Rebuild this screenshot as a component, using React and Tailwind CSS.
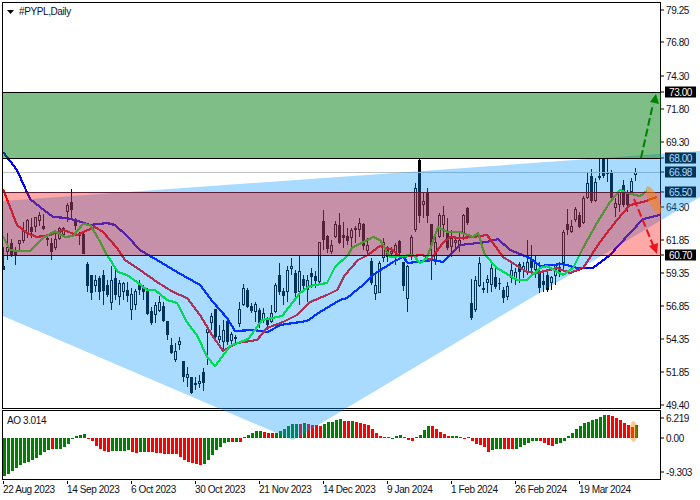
import React from "react";

// y in page pixels: [high, bodyTop, bodyBottom, low, bear]
const candles = [
  [247,266,270,270,1],[233,247,252,260,0],[239,243,255,257,1],[247,250,255,265,1],[240,240,244,250,0],
  [222,231,241,243,0],[219,220,233,238,0],[218,227,232,238,1],[217,217,227,232,0],[212,215,221,226,0],
  [214,226,229,230,1],[237,238,240,246,0],[238,243,252,260,1],[230,239,248,250,0],[227,228,239,240,0],
  [227,228,235,237,0],[203,205,212,222,0],[189,202,210,220,1],[218,220,226,230,1],[232,234,236,245,0],
  [232,234,254,254,1],[262,264,286,292,1],[276,275,293,300,1],[275,280,286,292,0],[276,278,292,300,1],
  [270,275,291,305,1],[280,285,295,297,1],[266,280,303,310,0],[270,278,295,300,1],[280,283,297,305,0],
  [282,283,292,300,0],[282,290,296,302,1],[288,294,310,320,0],[289,291,305,310,0],[280,284,290,295,1],
  [285,288,292,300,1],[288,291,314,315,1],[307,311,323,325,1],[302,305,315,323,0],[296,302,311,312,0],
  [302,306,321,322,1],[321,321,335,340,1],[338,345,353,354,1],[343,351,360,362,0],[337,341,345,350,0],
  [361,361,377,382,1],[367,374,378,387,0],[377,377,393,394,1],[377,383,385,390,1],[375,381,384,388,0],
  [368,372,383,391,1],[328,329,333,365,0],[313,316,323,330,0],[309,309,337,342,1],[325,336,340,343,0],
  [320,330,342,350,0],[317,321,342,345,1],[332,334,341,345,0],[335,337,339,344,1],[302,309,324,327,0],
  [284,288,305,306,0],[288,290,307,308,1],[303,306,311,313,1],[302,304,312,322,0],[308,310,323,328,1],
  [308,313,320,323,0],[317,320,325,330,1],[305,313,322,323,0],[283,285,312,313,0],[263,275,292,295,1],
  [288,291,296,305,1],[266,270,292,302,0],[258,266,269,275,0],[270,273,293,300,1],[255,271,292,305,0],
  [275,279,286,292,1],[275,280,290,302,0],[268,273,277,288,1],[271,276,281,288,1],[242,242,282,285,0],
  [210,221,240,250,1],[235,236,249,253,1],[240,245,252,254,0],[221,224,237,238,0],[213,225,243,244,1],
  [222,235,238,248,1],[228,236,241,245,1],[228,230,238,247,0],[226,228,230,243,0],[218,223,230,237,0],
  [223,224,246,250,1],[238,245,251,256,0],[258,261,283,285,1],[275,285,294,300,0],[261,263,293,293,0],
  [238,242,258,262,0],[246,250,257,262,1],[247,251,254,258,0],[243,245,253,265,0],[240,241,253,257,1],
  [262,262,286,291,1],[265,266,299,312,0],[235,237,256,260,0],[183,188,230,232,0],[159,160,216,223,1],
  [192,201,205,218,0],[188,192,216,223,1],[224,224,245,280,1],[235,242,262,265,0],[213,215,237,238,0],
  [206,215,225,237,0],[218,233,248,250,1],[230,238,247,257,0],[238,240,243,250,0],[233,240,245,252,0],
  [214,215,233,240,0],[207,208,223,225,1],[279,303,318,320,1],[276,280,310,312,0],[257,263,286,287,0],
  [282,288,290,293,1],[275,279,283,293,0],[262,268,285,292,0],[268,277,287,289,1],[278,283,284,290,1],
  [287,290,298,303,1],[282,286,297,300,0],[262,270,278,283,0],[268,272,280,285,0],[262,264,272,283,1],
  [262,266,270,278,0],[240,262,272,275,0],[245,260,268,272,1],[255,262,270,278,0],[262,272,288,293,1],
  [272,281,285,292,1],[270,275,290,292,1],[276,277,283,290,0],[265,265,276,285,0],[262,267,273,277,1],
  [230,232,263,270,0],[209,224,230,235,1],[220,226,232,233,0],[207,209,220,222,0],[212,215,227,228,1],
  [196,198,223,224,0],[173,183,198,199,0],[169,176,201,203,1],[178,182,201,202,0],[158,176,178,180,1],
  [158,158,176,178,1],[158,172,174,182,1],[170,172,198,200,1],[198,203,208,217,0],[190,192,205,212,0],
  [180,185,205,207,1],[190,192,205,212,1],[178,181,192,193,0],[168,172,175,181,0],
];

const blueLine = "3,152 17,170 30,199 40,207 53,217 67,218 78,221 90,225 107,223 115,225 127,236 140,250 150,256 157,260 177,272 200,285 213,302 227,318 235,331 253,330 268,332 280,325 307,321 320,312 340,300 347,298 363,285 373,275 393,262 403,257 408,263 433,260 443,262 450,255 460,245 487,242 498,239 510,250 530,258 540,266 563,264 577,268 593,268 610,255 630,233 643,219 660,215";
const redLine = "3,189 10,207 17,225 27,233 37,237 50,235 63,230 77,235 88,230 95,227 103,232 117,248 125,260 140,270 157,282 173,292 187,298 200,315 212,335 223,351 237,343 257,340 267,328 283,322 297,315 310,302 327,295 337,290 345,275 358,260 368,255 380,246 393,250 400,257 423,255 430,260 443,243 450,237 460,238 473,237 487,235 493,243 503,257 527,272 537,273 557,268 570,273 583,268 600,242 617,220 630,205 643,202 657,197";
const limeLine = "3,236 10,250 17,251 30,251 43,238 55,231 65,237 73,236 83,224 90,225 98,238 107,255 118,272 127,275 137,282 147,290 155,290 167,300 177,303 187,322 198,337 207,357 215,366 222,357 230,346 248,339 255,330 262,320 282,316 300,293 310,286 327,283 335,267 348,255 352,248 373,237 380,240 390,257 413,255 420,263 427,258 438,227 447,232 460,232 473,237 478,233 485,255 497,268 517,280 527,280 540,268 547,266 563,275 573,268 583,248 597,223 610,202 620,190 627,193 640,196 647,191";

// AO bars, read as y offset on a 3x scale with zero at 113
const aoSegments = [
  ["g", [228,222,213,205,195,190,185,180,175,165,155,150]],
  ["r", [148]],
  ["g", [147,146,141,132,117,107,105,102]],
  ["r", [114,124,137,147,153,155]],
  ["g", [153,153,153,153,150]],
  ["r", [155,160]],
  ["g", [156,156]],
  ["r", [156,157,158,160,162,163,162,163,170,180,186,188,192,195]],
  ["g", [192,180,165,150,140,128,125]],
  ["r", [127]],
  ["g", [125]],
  ["r", [126]],
  ["g", [110,105,100,93,92]],
  ["r", [96,98,99]],
  ["g", [98,92,88,79,72,72]],
  ["r", [72]],
  ["g", [69]],
  ["r", [73,75,75,78]],
  ["g", [71,66,66,61,57]],
  ["r", [63,63]],
  ["g", [63]],
  ["r", [65,69,71,76,87,98,107,110,112]],
  ["g", [116,108,105]],
  ["r", [112,120,122]],
  ["g", [112,105,91,78]],
  ["r", [78,87,96,102,107]],
  ["g", [109,108]],
  ["r", [111,116]],
  ["g", [112]],
  ["r", [124,133,135,142,155]],
  ["g", [150,148,147]],
  ["r", [147,147,147]],
  ["g", [147,142,135,128,124,122]],
  ["r", [124,129,134,137]],
  ["g", [133,130,124,108,100,87,77,70,65,60,57,52,46]],
  ["r", [46,48,54,60,69,76,80]],
  ["g", [75]],
];
const aoBars = aoSegments.flatMap(([c, vals]) => vals.map((v) => [c, v]));

const priceLabels = [
  { y: 10, text: "79.25" }, { y: 42, text: "76.80" }, { y: 76, text: "74.30" },
  { y: 92, text: "73.00", box: true }, { y: 109, text: "71.80" }, { y: 142, text: "69.30" },
  { y: 158, text: "68.00", box: true }, { y: 172, text: "66.98", box: true },
  { y: 192, text: "65.50", box: true }, { y: 207, text: "64.30" }, { y: 240, text: "61.85" },
  { y: 255, text: "60.70", box: true }, { y: 273, text: "59.35" }, { y: 306, text: "56.85" },
  { y: 339, text: "54.35" }, { y: 372, text: "51.85" }, { y: 405, text: "49.40" },
  { y: 418, text: "6.219" }, { y: 438, text: "0.00" }, { y: 472, text: "-9.303" },
];

const dates = ["22 Aug 2023", "14 Sep 2023", "6 Oct 2023", "30 Oct 2023", "21 Nov 2023", "14 Dec 2023", "9 Jan 2024", "1 Feb 2024", "26 Feb 2024", "19 Mar 2024"];

const MainChart = () => (
  <svg width="657" height="405" viewBox="3 3 657 405" className="block" shapeRendering="crispEdges">
    {candles.map(([hi, top, bot, lo, bear], k) => (
      <g key={k}>
        <rect x={3 + 4 * k} y={hi} width="1" height={lo - hi} fill="#000" />
        {bear ? (
          <rect x={2 + 4 * k} y={top} width="3" height={Math.max(bot - top, 1)} fill="#000" />
        ) : (
          <rect x={2.5 + 4 * k} y={top + 0.5} width="2" height={Math.max(bot - top - 1, 1)} fill="#fff" stroke="#000" />
        )}
      </g>
    ))}
    <line x1="3" y1="172.5" x2="660" y2="172.5" stroke="#c0c0c0" />
    <polyline points={blueLine} fill="none" stroke="#0000ff" strokeWidth="2.2" strokeLinejoin="round" />
    <polyline points={redLine} fill="none" stroke="#ff0000" strokeWidth="2.2" strokeLinejoin="round" />
    <polyline points={limeLine} fill="none" stroke="#00ff00" strokeWidth="2.2" strokeLinejoin="round" />
  </svg>
);

const AoChart = () => (
  <svg width="657" height="68" viewBox="3 411 657 68" className="block" shapeRendering="crispEdges">
    {aoBars.map(([c, v], k) => {
      const y = Math.round(400 + v / 3);
      return (
        <rect
          key={k}
          x={3 + 4 * k}
          y={Math.min(y, 438)}
          width="3"
          height={Math.max(Math.abs(y - 438), 1)}
          fill={c === "g" ? "#008000" : "#ff0000"}
        />
      );
    })}
  </svg>
);

// zones and arrows lie over the chart, axis and indicator
const Overlay = () => (
  <svg width="700" height="500" viewBox="0 0 700 500" className="absolute top-0 left-0 pointer-events-none">
    <polygon points="3,201 700,151 700,197 293,440 3,316" fill="rgb(0,150,255)" fillOpacity="0.34" />
    <rect x="3" y="92" width="658" height="66" fill="rgb(0,128,16)" fillOpacity="0.5" />
    <rect x="3" y="192" width="658" height="63" fill="rgb(255,0,0)" fillOpacity="0.34" />
    <g shapeRendering="crispEdges">
      <rect x="3" y="92" width="658" height="1" fill="#000" />
      <rect x="3" y="158" width="658" height="1" fill="#000" />
      <rect x="3" y="192" width="658" height="1" fill="#5a1f35" />
      <rect x="3" y="255" width="658" height="1" fill="#04233a" />
    </g>
    <ellipse cx="653.5" cy="200" rx="5" ry="15" transform="rotate(-25 653.5 200)" fill="rgb(255,128,0)" fillOpacity="0.5" />
    <ellipse cx="633.5" cy="431.5" rx="4" ry="10.5" fill="rgb(255,128,0)" fillOpacity="0.42" />
    <line x1="641" y1="158" x2="653" y2="104" stroke="#008000" strokeWidth="2" strokeDasharray="8 3" />
    <polygon points="656,94 650,102 659,104" fill="#008000" />
    <line x1="634" y1="199" x2="653" y2="245" stroke="#e8141e" strokeWidth="2" strokeDasharray="8 3" />
    <polygon points="657,254 649,246 658,243" fill="#e8141e" />
  </svg>
);

const App = () => {
  return (
    <div className="relative w-[700px] h-[500px] overflow-hidden bg-white pt-[2px] pl-[2px] font-['Liberation_Sans',sans-serif] text-[10px] tracking-[-0.4px] leading-none text-[#10101c]">
      <div className="flex">
        <div className="w-[659px] flex flex-col gap-px">
          <div className="relative h-[407px] border border-black">
            <MainChart />
            <div className="absolute top-[4px] left-[4px] flex items-center gap-[5px]">
              <svg width="7" height="4" viewBox="0 0 7 4" className="block">
                <polygon points="0,0 7,0 3.5,4" fill="#000" />
              </svg>
              <span>#PYPL,Daily</span>
            </div>
          </div>
          <div className="relative h-[70px] border border-black">
            <AoChart />
            <div className="absolute top-[5px] left-[4px]">AO 3.014</div>
          </div>
          <div className="flex">
            {dates.map((d) => (
              <div key={d} className="w-16 h-[20px] pl-px">
                <div className="w-px h-[3px] bg-black" />
                <div className="mt-px whitespace-nowrap">{d}</div>
              </div>
            ))}
          </div>
        </div>
        <div className="relative flex-1">
          {priceLabels.map((p) => (
            <div key={p.text} className="absolute left-0 flex items-center h-[11px] -translate-y-[5.5px]" style={{ top: p.y - 2 }}>
              <div className="w-[3px] h-px bg-black" />
              {p.box ? (
                <span className="ml-px px-[4px] h-[11px] flex items-center bg-black text-white">{p.text}</span>
              ) : (
                <span className="ml-[2px]">{p.text}</span>
              )}
            </div>
          ))}
        </div>
      </div>
      <Overlay />
    </div>
  );
};

export default App;
